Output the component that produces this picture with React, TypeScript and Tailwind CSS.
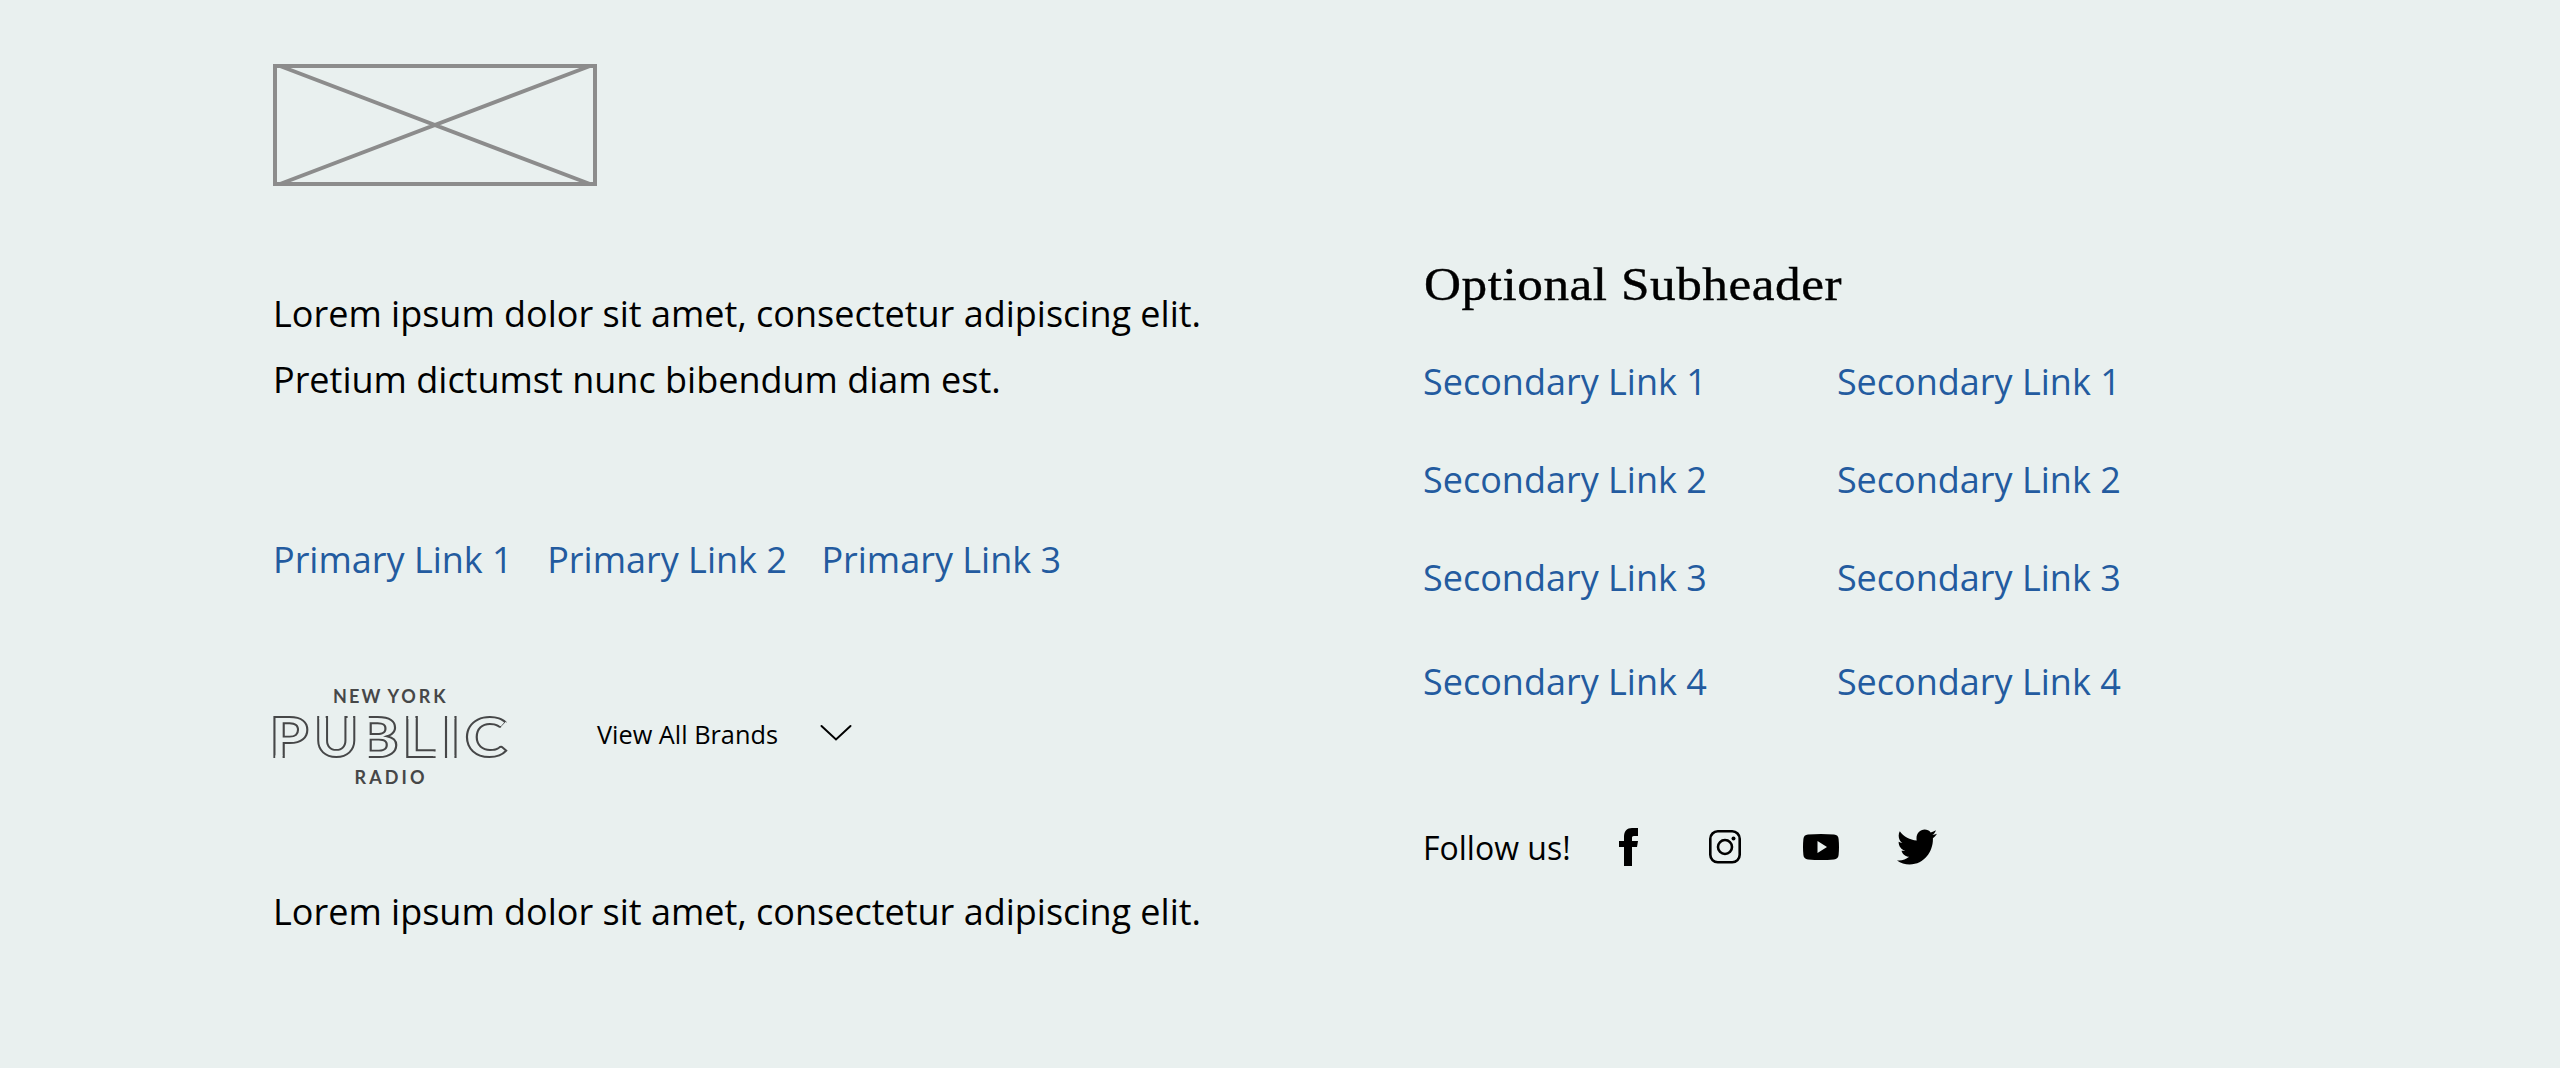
import { FaTwitter } from "react-icons/fa";

const primary = ["Primary Link 1", "Primary Link 2", "Primary Link 3"];
const secondary = ["Secondary Link 1", "Secondary Link 2", "Secondary Link 3", "Secondary Link 4"];

const letters = [
  { c: "P", x: 269.8, w: 38.8 },
  { c: "U", x: 314.3, w: 44 },
  { c: "L", x: 402.4, w: 33 },
  { c: "I", x: 441.3, w: 19 },
  { c: "C", x: 464.7, w: 42 },
];

function Logo() {
  return (
    <svg className="block h-[100px] w-[236px] shrink-0 overflow-visible" viewBox="273 686 236 100" fill="#464748" fontFamily="Lato, sans-serif">
      <clipPath id="openB"><rect x="368.8" y="710" width="32" height="54" /></clipPath>
      <text x="333" y="703" fontSize="18" fontWeight="700" textLength="47.5">NEW</text>
      <text x="387.5" y="703" fontSize="18" fontWeight="700" textLength="58">YORK</text>
      <g fill="none" stroke="#464748" strokeWidth="1.9" fontSize="56" fontWeight="900">
        {letters.map((l) => (
          <text key={l.c} x={l.x} y="757.3" textLength={l.w} lengthAdjust="spacingAndGlyphs">{l.c}</text>
        ))}
        <g clipPath="url(#openB)">
          <text x="356.3" y="757.3" textLength="42.5" lengthAdjust="spacingAndGlyphs">B</text>
        </g>
      </g>
      {/* gaps that leave the stroke ends open */}
      <g fill="#e9f0ef">
        <rect x="275.2" y="755.5" width="7.4" height="4" />
        <rect x="319.2" y="715" width="6.5" height="4" />
        <rect x="347.6" y="715" width="5.5" height="4" />
        <rect x="408.2" y="715" width="7.2" height="4" />
        <rect x="433" y="751.5" width="4" height="4.7" />
        <rect x="447.1" y="715" width="7.3" height="4" />
        <rect x="447.1" y="755.5" width="7.3" height="4" />
        <path d="M507 722.8L501.8 728.4" stroke="#e9f0ef" strokeWidth="3.4" />
      </g>
      <text x="354.5" y="783.7" fontSize="18" fontWeight="700" textLength="70">RADIO</text>
    </svg>
  );
}

export default function App() {
  return (
    <footer className="flex h-[1068px] w-[2560px] bg-[#e9f0ef] pl-[273px] font-['Open_Sans',sans-serif] text-4xl text-black">
      <section className="w-[1150px] pt-16">
        <svg className="block h-[122px] w-[324px]" viewBox="0 0 324 122" fill="none" stroke="#8c8c8c" strokeWidth="4">
          <path d="M2 2H322V120H2ZM7 2L317 120M317 2L7 120" />
        </svg>
        <p className="mt-[95px] leading-[66px]">
          Lorem ipsum dolor sit amet, consectetur adipiscing elit.
          <br />
          Pretium dictumst nunc bibendum diam est.
        </p>
        <nav className="mt-[114px] flex gap-[34.5px] leading-[66px] text-[#235b9f]">
          {primary.map((t) => (
            <a key={t}>{t}</a>
          ))}
        </nav>
        <div className="mt-[93px] flex h-[100px] items-center">
          <Logo />
          <button className="ml-[88px] flex items-center pb-1 text-[25.3px]">
            View All Brands
            <svg className="mb-0.5 ml-[42px] h-[18px] w-8" viewBox="0 0 32 18" fill="none" stroke="#000" strokeWidth="2" strokeLinecap="round">
              <path d="M1.5 2L16 15.5L30.5 2" />
            </svg>
          </button>
        </div>
        <p className="mt-[93px] leading-[66px]">Lorem ipsum dolor sit amet, consectetur adipiscing elit.</p>
      </section>
      <section className="pt-[251px]">
        <h2 className="ml-px origin-left scale-x-[1.09] font-['Liberation_Serif',serif] text-[47px] leading-[66px] tracking-[.5px] [-webkit-text-stroke:.4px]">Optional Subheader</h2>
        <div className="mt-8 flex gap-[130px] leading-[66px] text-[#235b9f]">
          {[0, 1].map((n) => (
            <ul key={n} className="flex flex-col gap-8">
              {secondary.map((t, i) => (
                <li key={t} className={i === 3 ? "pt-1.5" : ""}>{t}</li>
              ))}
            </ul>
          ))}
        </div>
        <div className="mt-[99px] flex h-[66px] items-center text-[32px]">
          <span className="pt-0.5">Follow us!</span>
          <svg className="ml-[48px] h-[38px] w-5" viewBox="0 0 20 38">
            <path d="M5 38V19H0V13H5V9C5 3 8 0 13 0H19V8H15C13 8 13 9 13 10V13H19L18 19H13V38Z" />
          </svg>
          <svg className="ml-[70px] h-[34px] w-8" viewBox="0 0 32 34" fill="none" stroke="#000" strokeWidth="2.6">
            <rect x="1.3" y="1.3" width="29.4" height="31" rx="7.5" />
            <circle cx="16" cy="17" r="7" />
            <circle cx="24.5" cy="8.5" r="2" fill="#000" stroke="none" />
          </svg>
          <svg className="ml-[62px] h-[26px] w-9" viewBox="0 0 36 26">
            <path fillRule="evenodd" d="M5 .6Q18-.6 31 .6Q35.4 1 35.6 5Q36.4 13 35.6 21Q35.3 25 31 25.4Q18 26.6 5 25.4Q.7 25 .4 21Q-.4 13 .4 5Q.7 1 5 .6ZM14.5 7V19L24 13Z" />
          </svg>
          <FaTwitter className="ml-[58px] size-10 scale-y-[1.07]" />
        </div>
      </section>
    </footer>
  );
}
